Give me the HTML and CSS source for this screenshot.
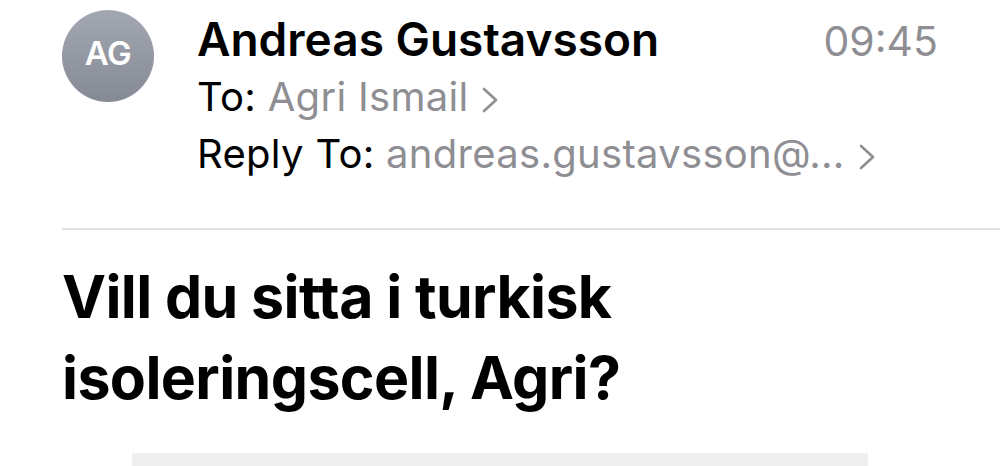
FILE: index.html
```html
<!DOCTYPE html>
<html lang="sv">
<head>
<meta charset="utf-8">
<title>Mail</title>
<link rel="stylesheet" href="styles.css">
</head>
<body>
<div class="page">
  <header class="header">
    <div class="avatar">AG</div>
    <div class="meta">
      <div class="top-row">
        <span class="sender">Andreas Gustavsson</span>
        <span class="time">09:45</span>
      </div>
      <div class="line"><span class="label">To:</span> <span class="value">Agri Ismail</span><svg class="chev" width="16" height="26" viewBox="0 0 16 26"><polyline points="2,2 14,13 2,24" fill="none" stroke="#8e8e93" stroke-width="2.6" stroke-linecap="round" stroke-linejoin="round"/></svg></div>
      <div class="line"><span class="label">Reply To:</span> <span class="value">andreas.gustavsson@...</span><svg class="chev" width="16" height="26" viewBox="0 0 16 26"><polyline points="2,2 14,13 2,24" fill="none" stroke="#8e8e93" stroke-width="2.6" stroke-linecap="round" stroke-linejoin="round"/></svg></div>
    </div>
  </header>
  <div class="divider"></div>
  <h1 class="subject">Vill du sitta i turkisk<br>isoleringscell, Agri?</h1>
  <div class="body-block"></div>
</div>
</body>
</html>
```
FILE: styles.css
```css
html, body {
  margin: 0;
  padding: 0;
  background: #ffffff;
  overflow: hidden;
}
.page {
  width: 1000px;
  height: 466px;
  font-family: Inter, "Noto Sans", sans-serif;
  color: #000;
  overflow: hidden;
}
.header {
  display: flex;
  align-items: flex-start;
  gap: 43px;
  padding: 10px 62px 0 62px;
}
.avatar {
  flex: none;
  width: 92px;
  height: 92px;
  border-radius: 50%;
  background: linear-gradient(180deg, #a3a7b1 0%, #868a94 100%);
  color: #fff;
  font-size: 33px;
  font-weight: 600;
  display: flex;
  align-items: center;
  justify-content: center;
  padding-bottom: 6px;
  box-sizing: border-box;
  letter-spacing: -0.5px;
}
.meta {
  flex: 1;
  display: flex;
  flex-direction: column;
}
.top-row {
  display: flex;
  justify-content: space-between;
  align-items: baseline;
  height: 58px;
  line-height: 58px;
}
.sender {
  font-size: 46px;
  font-weight: 600;
  letter-spacing: 0;
}
.time {
  font-size: 41px;
  color: #8e8e93;
  font-weight: 400;
}
.line {
  font-size: 40px;
  line-height: 57px;
  height: 57px;
  white-space: nowrap;
  letter-spacing: 0.3px;
}
.label { color: #000; }
.value { color: #8e8e93; }
.chev {
  margin-left: 14px;
  vertical-align: -2px;
}
.divider {
  margin: 46px 0 0 62px;
  height: 2px;
  background: #e0e0e0;
}
.subject {
  margin: 26px 0 0 62px;
  font-size: 59px;
  line-height: 81px;
  font-weight: 700;
  letter-spacing: -0.6px;
}
.body-block {
  margin: 35px 0 0 132px;
  width: 736px;
  height: 40px;
  background: #efefef;
}
```
